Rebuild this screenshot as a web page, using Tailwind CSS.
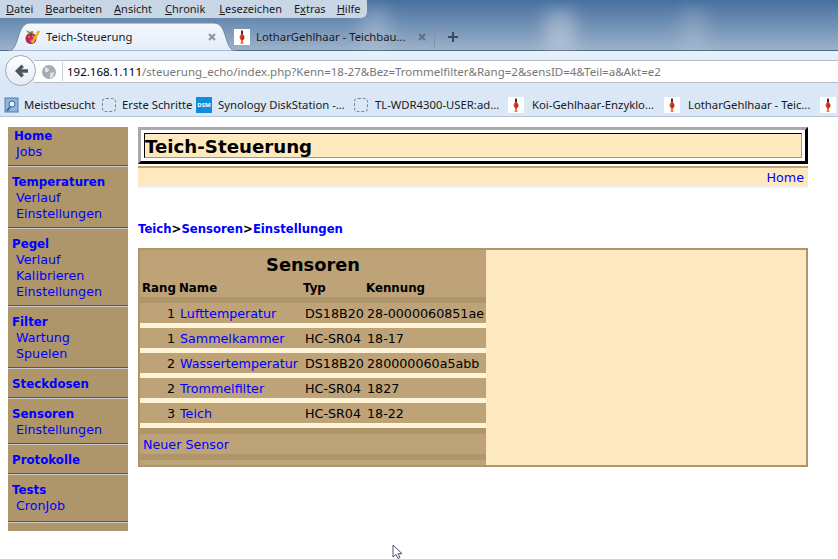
<!DOCTYPE html>
<html lang="de">
<head>
  <meta charset="UTF-8" />
  <title>Teich-Steuerung</title>
  <script src="https://cdn.jsdelivr.net/npm/@tailwindcss/browser@4"></script>
</head>
<body class="w-[838px] h-[559px] overflow-hidden bg-white relative font-['DejaVu_Sans',sans-serif] text-[12.7px] leading-4 text-black">

  <!-- Browser chrome -->
  <header class="font-['Noto_Sans',sans-serif] text-[11.3px] text-[#1a1a1a] whitespace-nowrap">
    <div class="relative h-[51px] bg-gradient-to-b from-[#46709e] to-[#9db2cb] border-b border-[#4f6a88]">
      <div class="absolute left-[360px] top-[8px] w-[30px] h-[40px] bg-white/20 blur-sm rounded"></div>
      <div class="absolute left-[545px] top-[10px] w-[30px] h-[40px] bg-white/30 blur-sm rounded"></div>
      <div class="absolute left-[680px] top-[8px] w-[26px] h-[40px] bg-white/15 blur-sm rounded"></div>

      <nav class="absolute left-0 top-0 w-[367px] h-[18px] bg-[#c8d6e6] rounded-br-md flex items-center gap-[12px] pl-[6px] text-[11px]">
        <span><u>D</u>atei</span><span><u>B</u>earbeiten</span><span><u>A</u>nsicht</span><span class="ml-px"><u>C</u>hronik</span><span class="ml-[2px]"><u>L</u>esezeichen</span><span>E<u>x</u>tras</span><span class="-ml-[1px]"><u>H</u>ilfe</span>
      </nav>

      <!-- active tab -->
      <svg class="absolute left-[8px] top-[22px] w-[228px] h-[29px]" viewBox="0 0 228 29">
        <defs><linearGradient id="tabfill" x1="0" y1="0" x2="0" y2="1"><stop offset="0" stop-color="#f5f8fd"/><stop offset="1" stop-color="#e2ecf9"/></linearGradient></defs>
        <path d="M0 29C12 29 8 1 22 1L206 1C220 1 216 29 228 29Z" fill="url(#tabfill)" stroke="#6f87a3"/>
      </svg>
      <div class="absolute left-[24px] top-[29px] w-[192px] h-[16px] flex items-center">
        <svg class="w-4 h-4" viewBox="0 0 16 16"><path d="M2 1l4 2 2-1 2 1-3 2-3-1z" fill="#5d9b3a"/><circle cx="7" cy="9.500" r="5.500" fill="#b8264f"/><circle cx="5" cy="8" r="1.200" fill="#e0608a"/><circle cx="9" cy="7.500" r="1.200" fill="#e0608a"/><circle cx="7" cy="11.500" r="1.200" fill="#e0608a"/><path d="M8 14L15 2" stroke="#e8b21c" stroke-width="2.500"/></svg>
        <span class="ml-[6px]">Teich-Steuerung</span>
        <svg class="ml-auto w-[8px] h-[8px]" viewBox="0 0 8 8"><path d="M1 1l6 6M7 1l-6 6" stroke="#8a949f" stroke-width="2"/></svg>
      </div>
      <!-- second tab -->
      <div class="absolute left-[234px] top-[29px] w-[192px] h-[16px] flex items-center">
        <svg class="w-4 h-4" viewBox="0 0 16 16"><rect width="16" height="16" fill="#fff"/><path d="M8 1.500v4" stroke="#5a2a20" stroke-width="2"/><path d="M6.500 5.500h3l1 4-2.500 3-2-3z" fill="#d8261c"/><path d="M7 12h2l.5 3h-3z" fill="#e8842a"/><path d="M5 8h1M10 8h1" stroke="#7fa6a0"/></svg>
        <span class="ml-[6px]">LotharGehlhaar - Teichbau...</span>
        <svg class="ml-auto w-[8px] h-[8px]" viewBox="0 0 8 8"><path d="M1 1l6 6M7 1l-6 6" stroke="#5f7085" stroke-width="2"/></svg>
      </div>
      <div class="absolute left-[434px] top-[26px] w-px h-[22px] bg-[#7f93aa]"></div>
      <svg class="absolute left-[448px] top-[32px] w-[10px] h-[10px]" viewBox="0 0 10 10"><path d="M5 0v10M0 5h10" stroke="#3d4a59" stroke-width="2"/></svg>
    </div>

    <!-- nav toolbar -->
    <div class="relative h-[33px] bg-gradient-to-b from-[#e8f1fb] to-[#d9e7f6]">
      <div class="absolute left-[34px] right-0 top-[9px] h-[23px] bg-white border-y border-[#b4bfcb] flex items-center">
        <svg class="w-4 h-4 ml-[7px]" viewBox="0 0 16 16"><circle cx="8" cy="8" r="7" fill="#a8adb3"/><path d="M4 3l4 2-1 3-3 0zM9 9l4-1-1 5-3 1z" fill="#dfe2e6"/></svg>
        <span class="w-px h-[19px] bg-[#c4ccd6] ml-[5px]"></span>
        <span class="ml-[4px] pt-px text-[11.5px] text-[#777]"><span class="text-black">192.168.1.111</span>/steuerung_echo/index.php?Kenn=18-27&amp;Bez=Trommelfilter&amp;Rang=2&amp;sensID=4&amp;Teil=a&amp;Akt=e2</span>
      </div>
      <div class="absolute left-[5px] top-[4px] w-[31px] h-[31px] rounded-full bg-gradient-to-b from-white to-[#e4ebf3] border border-[#9aa7b6] flex items-center justify-center">
        <svg class="w-4 h-4" viewBox="0 0 16 16"><path d="M8.500 1.500L2 8l6.500 6.500L11 12 8.500 9.700H15V6.300H8.500L11 4z" fill="#4a5560"/></svg>
      </div>
    </div>

    <!-- bookmarks -->
    <div class="h-[33px] bg-[#d9e7f6] border-b border-[#b7c4d3] flex items-center overflow-hidden pl-[4px] pt-[10px]">
      <svg class="w-4 h-4 shrink-0" viewBox="0 0 16 16"><rect x="1" y="1" width="13" height="14" fill="#8fb5dc" stroke="#4f7fb2"/><circle cx="8" cy="7" r="3" fill="#e6f0fa" stroke="#35689e"/><path d="M6 10l-3 4" stroke="#35689e" stroke-width="2"/></svg>
      <span class="ml-[4px] w-[71px]">Meistbesucht</span>
      <span class="ml-[7px] w-[14px] h-[14px] border border-dashed border-[#7d8792] rounded-sm shrink-0"></span>
      <span class="ml-[6px] w-[68px]">Erste Schritte</span>
      <span class="ml-[6px] w-4 h-4 shrink-0 bg-[#0f8be0] text-white text-[6px] leading-4 font-bold text-center">DSM</span>
      <span class="ml-[6px] w-[130px]">Synology DiskStation -...</span>
      <span class="ml-[6px] w-[14px] h-[14px] border border-dashed border-[#7d8792] rounded-sm shrink-0"></span>
      <span class="ml-[7px] w-[126px]">TL-WDR4300-USER:ad...</span>
      <svg class="ml-[7px] w-4 h-4 shrink-0" viewBox="0 0 16 16"><rect width="16" height="16" fill="#fff"/><path d="M8 1.500v4" stroke="#5a2a20" stroke-width="2"/><path d="M6.500 5.500h3l1 4-2.500 3-2-3z" fill="#d8261c"/><path d="M7 12h2l.5 3h-3z" fill="#e8842a"/><path d="M5 8h1M10 8h1" stroke="#7fa6a0"/></svg>
      <span class="ml-[8px] w-[124px]">Koi-Gehlhaar-Enzyklo...</span>
      <svg class="ml-[8px] w-4 h-4 shrink-0" viewBox="0 0 16 16"><rect width="16" height="16" fill="#fff"/><path d="M8 1.500v4" stroke="#5a2a20" stroke-width="2"/><path d="M6.500 5.500h3l1 4-2.500 3-2-3z" fill="#d8261c"/><path d="M7 12h2l.5 3h-3z" fill="#e8842a"/><path d="M5 8h1M10 8h1" stroke="#7fa6a0"/></svg>
      <span class="ml-[8px] w-[124px]">LotharGehlhaar - Teic...</span>
      <svg class="ml-[8px] w-4 h-4 shrink-0" viewBox="0 0 16 16"><rect width="16" height="16" fill="#fff"/><path d="M8 1.500v4" stroke="#5a2a20" stroke-width="2"/><path d="M6.500 5.500h3l1 4-2.500 3-2-3z" fill="#d8261c"/><path d="M7 12h2l.5 3h-3z" fill="#e8842a"/><path d="M5 8h1M10 8h1" stroke="#7fa6a0"/></svg>
    </div>
  </header>

  <!-- Page -->
  <div class="flex items-start pt-[10px] pl-[8px]">

    <!-- Sidebar -->
    <aside class="w-[120px] h-[404px] bg-[#ae966a] flex flex-col text-[#0000ff] [&>div>*]:h-4 [&>div>*]:leading-[18px]">
      <div class="pb-[6px] pl-[6px] border-b border-[#555]">
        <b class="block text-[11.8px]">Home</b>
        <a class="block pl-[2px]">Jobs</a>
      </div>
      <div class="py-[6px] pl-[4px] border-y border-t-[#ccc] border-b-[#555]">
        <b class="block text-[11.8px]">Temperaturen</b>
        <a class="block pl-[4px]">Verlauf</a>
        <a class="block pl-[4px]">Einstellungen</a>
      </div>
      <div class="py-[6px] pl-[4px] border-y border-t-[#ccc] border-b-[#555]">
        <b class="block text-[11.8px]">Pegel</b>
        <a class="block pl-[4px]">Verlauf</a>
        <a class="block pl-[4px]">Kalibrieren</a>
        <a class="block pl-[4px]">Einstellungen</a>
      </div>
      <div class="py-[6px] pl-[4px] border-y border-t-[#ccc] border-b-[#555]">
        <b class="block text-[11.8px]">Filter</b>
        <a class="block pl-[4px]">Wartung</a>
        <a class="block pl-[4px]">Spuelen</a>
      </div>
      <div class="py-[6px] pl-[4px] border-y border-t-[#ccc] border-b-[#555]">
        <b class="block text-[11.8px]">Steckdosen</b>
      </div>
      <div class="py-[6px] pl-[4px] border-y border-t-[#ccc] border-b-[#555]">
        <b class="block text-[11.8px]">Sensoren</b>
        <a class="block pl-[4px]">Einstellungen</a>
      </div>
      <div class="py-[6px] pl-[4px] border-y border-t-[#ccc] border-b-[#555]">
        <b class="block text-[11.8px]">Protokolle</b>
      </div>
      <div class="pt-[6px] pb-[8px] pl-[4px] border-y border-t-[#ccc] border-b-[#555]">
        <b class="block text-[11.8px]">Tests</b>
        <a class="block pl-[4px]">CronJob</a>
      </div>
      <div class="flex-1 border-t border-[#ccc]"></div>
    </aside>

    <!-- Main -->
    <main class="ml-[10px] w-[670px]">
      <div class="h-[37px] border-[3px] border-t-[#aaaaaa] border-l-[#aaaaaa] border-r-black border-b-black bg-white p-[3px]">
        <h1 class="h-[25px] border border-t-black border-l-black border-r-[#999] border-b-[#999] bg-[#fee8bf] text-[18.2px] leading-[25px] font-bold">Teich-Steuerung</h1>
      </div>
      <div class="mt-[2px] h-[22px] border-t-2 border-t-[#bda377] border-b-2 border-b-[#eeeef8] bg-[#fee8bf] text-right pr-[4px] text-[#0000ff] leading-[20px]">Home</div>
      <p class="mt-[33px] text-[11.7px] font-bold text-[#0000ff]">Teich<span class="text-black">&gt;</span>Sensoren<span class="text-black">&gt;</span>Einstellungen</p>

      <section class="mt-[11px] h-[219px] border-2 border-[#ae966a] bg-[#fee8bf]">
        <div class="w-[346px] h-[215px] bg-[#bda377]">
          <h2 class="h-[29px] text-center text-[17.8px] leading-[30px] font-bold">Sensoren</h2>
          <div class="grid grid-cols-[38px_124px_63px_121px] h-[18px] text-[11.8px] leading-[18px] font-bold">
            <span class="pl-[2px]">Rang</span><span class="pl-[1px]">Name</span><span class="pl-[1px]">Typ</span><span class="pl-[1px]">Kennung</span>
          </div>
          <div class="h-[6px] bg-[#ae966a]"></div>

          <div class="grid grid-cols-[38px_124px_63px_121px] h-5 leading-[22px] whitespace-nowrap">
            <span class="text-right pr-[3px]">1</span><a class="pl-[2px] text-[#0000ff]">Lufttemperatur</a><span class="pl-[3px]">DS18B20</span><span class="pl-[2px]">28-0000060851ae</span>
          </div>
          <div class="h-[5px] bg-[#fff3d8]"></div>
          <div class="grid grid-cols-[38px_124px_63px_121px] h-5 leading-[22px] whitespace-nowrap">
            <span class="text-right pr-[3px]">1</span><a class="pl-[2px] text-[#0000ff]">Sammelkammer</a><span class="pl-[3px]">HC-SR04</span><span class="pl-[2px]">18-17</span>
          </div>
          <div class="h-[5px] bg-[#fff3d8]"></div>
          <div class="grid grid-cols-[38px_124px_63px_121px] h-5 leading-[22px] whitespace-nowrap">
            <span class="text-right pr-[3px]">2</span><a class="pl-[2px] text-[#0000ff]">Wassertemperatur</a><span class="pl-[3px]">DS18B20</span><span class="pl-[2px]">280000060a5abb</span>
          </div>
          <div class="h-[5px] bg-[#fff3d8]"></div>
          <div class="grid grid-cols-[38px_124px_63px_121px] h-5 leading-[22px] whitespace-nowrap">
            <span class="text-right pr-[3px]">2</span><a class="pl-[2px] text-[#0000ff]">Trommelfilter</a><span class="pl-[3px]">HC-SR04</span><span class="pl-[2px]">1827</span>
          </div>
          <div class="h-[5px] bg-[#fff3d8]"></div>
          <div class="grid grid-cols-[38px_124px_63px_121px] h-5 leading-[22px] whitespace-nowrap">
            <span class="text-right pr-[3px]">3</span><a class="pl-[2px] text-[#0000ff]">Teich</a><span class="pl-[3px]">HC-SR04</span><span class="pl-[2px]">18-22</span>
          </div>
          <div class="h-[5px] bg-[#fff3d8]"></div>

          <div class="h-[6px] bg-[#ae966a]"></div>
          <a class="block h-5 pl-[3px] leading-[22px] text-[#0000ff]">Neuer Sensor</a>
          <div class="h-[6px] bg-[#ae966a]"></div>
        </div>
      </section>
    </main>
  </div>

  <!-- Mouse pointer -->
  <svg class="absolute left-[392px] top-[544px] w-[13px] h-[15px]" viewBox="0 0 13 15"><path d="M1 1v12l3-2.500 2 4 2-1-2-3.800h4z" fill="#fff" stroke="#4a5568"/></svg>
</body>
</html>
